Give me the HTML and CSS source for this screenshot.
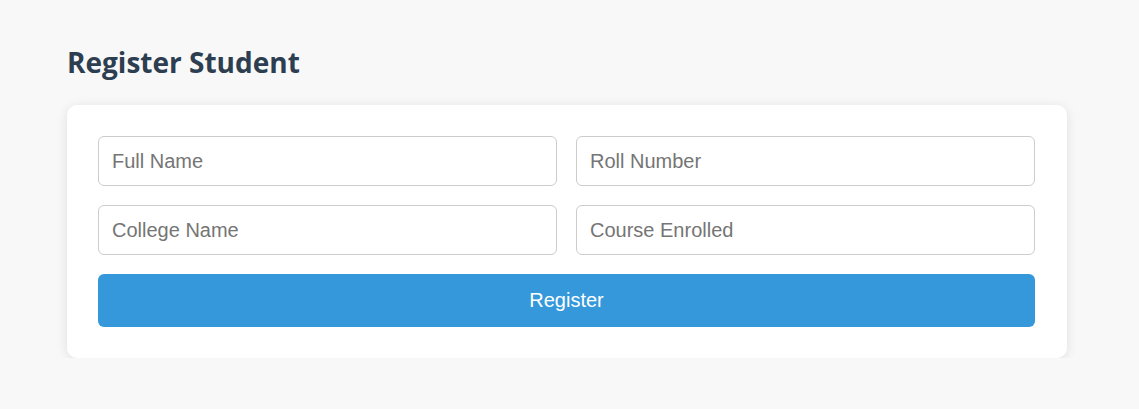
FILE: index.html
```html
<!DOCTYPE html>
<html>
<head>
<meta charset="utf-8">
<link rel="stylesheet" href="styles.css">
</head>
<body>
<div class="container">
  <h2 class="title">Register Student</h2>
  <form class="card">
    <div class="grid">
      <input class="field" type="text" placeholder="Full Name">
      <input class="field" type="text" placeholder="Roll Number">
      <input class="field" type="text" placeholder="College Name">
      <input class="field" type="text" placeholder="Course Enrolled">
    </div>
    <button class="btn" type="button">Register</button>
  </form>
</div>
</body>
</html>
```
FILE: styles.css
```css
html, body {
  margin: 0;
  padding: 0;
  background: #f8f8f8;
}
.container {
  width: 1000px;
  margin: 0 0 0 67px;
  padding-top: 42px;
}
.title {
  margin: 0 0 23px 0;
  font-family: "Open Sans", "Lato", sans-serif;
  font-weight: 700;
  font-size: 28px;
  line-height: 40px;
  color: #2c3e50;
}
.card {
  box-sizing: border-box;
  width: 1000px;
  background: #fff;
  border-radius: 10px;
  box-shadow: 0 2px 12px rgba(0,0,0,0.1);
  padding: 31px 32px 31px 31px;
  display: flex;
  flex-direction: column;
  gap: 19px;
}
.grid {
  display: grid;
  grid-template-columns: 1fr 1fr;
  column-gap: 19px;
  row-gap: 19px;
}
.field {
  box-sizing: border-box;
  height: 50px;
  width: 100%;
  border: 1px solid #ccc;
  border-radius: 6px;
  padding: 0 13px;
  font-family: "Liberation Sans", Arial, sans-serif;
  font-size: 20px;
  color: #333;
  background: #fff;
  outline: none;
}
.field::placeholder {
  color: #757575;
}
.btn {
  height: 53px;
  width: 100%;
  border: none;
  border-radius: 6px;
  background: #3498db;
  color: #fff;
  font-family: "Liberation Sans", Arial, sans-serif;
  font-size: 20px;
  cursor: pointer;
}
```
